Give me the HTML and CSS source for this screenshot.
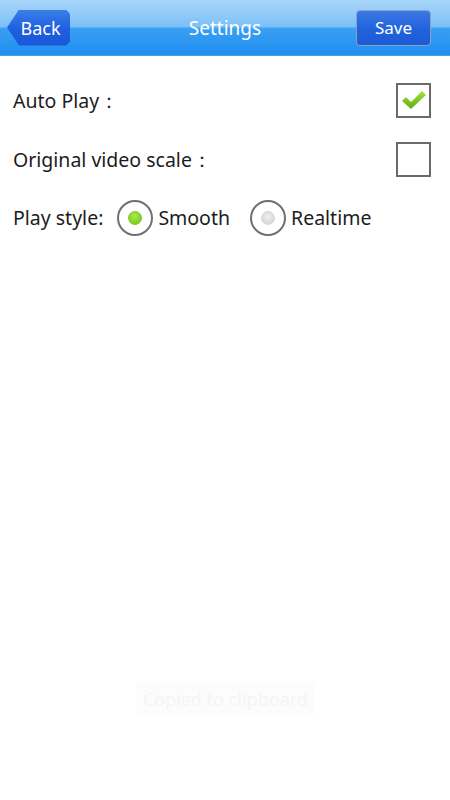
FILE: index.html
```html
<!DOCTYPE html>
<html lang="en">
<head>
  <meta charset="UTF-8" />
  <meta name="viewport" content="width=device-width, initial-scale=1" />
  <title>Settings</title>
  <link rel="stylesheet" href="styles.css">
</head>
<body>

  <div class="topbar">
    <button class="back-btn">Back</button>
    <h1>Settings</h1>
    <button class="save-btn">Save</button>
  </div>

  <div class="settings">
    <div class="row">
      <span class="label">Auto Play：</span>
      <span class="check checked">
        <svg width="26" height="22" viewBox="0 0 26 22">
          <defs>
            <linearGradient id="tick" x1="0" y1="0" x2="0" y2="1">
              <stop offset="0" stop-color="#a6e23a" />
              <stop offset="1" stop-color="#5fae10" />
            </linearGradient>
          </defs>
          <path d="M1 12 L5 8 L10 13 L21 2 L25 6 L10 20 Z" fill="url(#tick)" />
        </svg>
      </span>
    </div>
    <div class="row">
      <span class="label">Original video scale：</span>
      <span class="check"></span>
    </div>
    <div class="row radio-row">
      <span class="label">Play style:</span>
      <label class="radio on"><span class="dot"></span>Smooth</label>
      <label class="radio"><span class="dot"></span>Realtime</label>
    </div>
  </div>

  <div class="toast">Copied to clipboard</div>

</body>
</html>
```

FILE: styles.css
```css
* {
  margin: 0;
  padding: 0;
  box-sizing: border-box;
}
body {
  background-color: #fff;
  color: #1c1c1c;
  font-family: "Noto Sans", "Open Sans", sans-serif;
  width: 450px;
  height: 800px;
  position: relative;
}
.topbar {
  height: 56px;
  display: flex;
  align-items: center;
  justify-content: space-between;
  padding: 0 19px 0 7px;
  position: relative;
  background: linear-gradient(to bottom, #a9d6fa 0%, #7cc0f7 48%, #3a9ff3 52%, #1f8eef 100%);
  border-bottom: 1px solid #4a9fe0;
}
.topbar h1 {
  position: absolute;
  left: 0;
  right: 0;
  text-align: center;
  font-size: 19px;
  font-weight: normal;
  color: #fff;
  pointer-events: none;
}
.back-btn, .save-btn {
  font-family: inherit;
  color: #fff;
  font-size: 17px;
  height: 36px;
  position: relative;
  z-index: 1;
  cursor: pointer;
}
.back-btn {
  width: 63px;
  border: none;
  padding-left: 4px;
  font-size: 18px;
  background: linear-gradient(to bottom, #3b7ee9 0%, #1d5fdf 55%, #1a57d8 100%);
  clip-path: polygon(0 50%, 12px 0, calc(100% - 4px) 0, 100% 4px, 100% calc(100% - 4px), calc(100% - 4px) 100%, 12px 100%);
  border-radius: 0 5px 5px 0;
}
.save-btn {
  width: 75px;
  border: 1px solid #8d9fbf;
  border-radius: 4px;
  background: linear-gradient(to bottom, #3a78e4 0%, #2162dc 55%, #1d5bd6 100%);
}
.settings {
  padding: 27px 19px 0 13px;
}
.row {
  display: flex;
  align-items: center;
  justify-content: space-between;
  height: 35px;
  margin-bottom: 24px;
}
.label {
  font-size: 19.5px;
}
.check {
  width: 35px;
  height: 35px;
  border: 2px solid #6a6a6a;
  display: flex;
  align-items: center;
  justify-content: center;
}
.check svg {
  margin-top: -2px;
}
.radio-row {
  justify-content: flex-start;
  margin-top: -1px;
}
.radio-row .label {
  margin-right: 14px;
}
.radio {
  display: flex;
  align-items: center;
  font-size: 19.5px;
  margin-right: 20px;
}
.dot {
  width: 36px;
  height: 36px;
  border-radius: 50%;
  border: 2px solid #707070;
  background: #fff;
  margin-right: 5px;
  display: flex;
  align-items: center;
  justify-content: center;
}
.dot::after {
  content: "";
  width: 12px;
  height: 12px;
  border-radius: 50%;
  background: radial-gradient(circle at 50% 40%, #f0f0f0, #cfcfcf);
  border: 1px solid #d8d8d8;
}
.radio.on .dot::after {
  background: radial-gradient(circle at 45% 35%, #aee84a, #6cc417);
  border-color: #7fc62a;
}
.toast {
  position: absolute;
  left: 136px;
  top: 683px;
  width: 179px;
  height: 32px;
  background: #fcfcfc;
  color: #f5f5f5;
  font-size: 18px;
  text-align: center;
  line-height: 32px;
  border-radius: 3px;
}
```
